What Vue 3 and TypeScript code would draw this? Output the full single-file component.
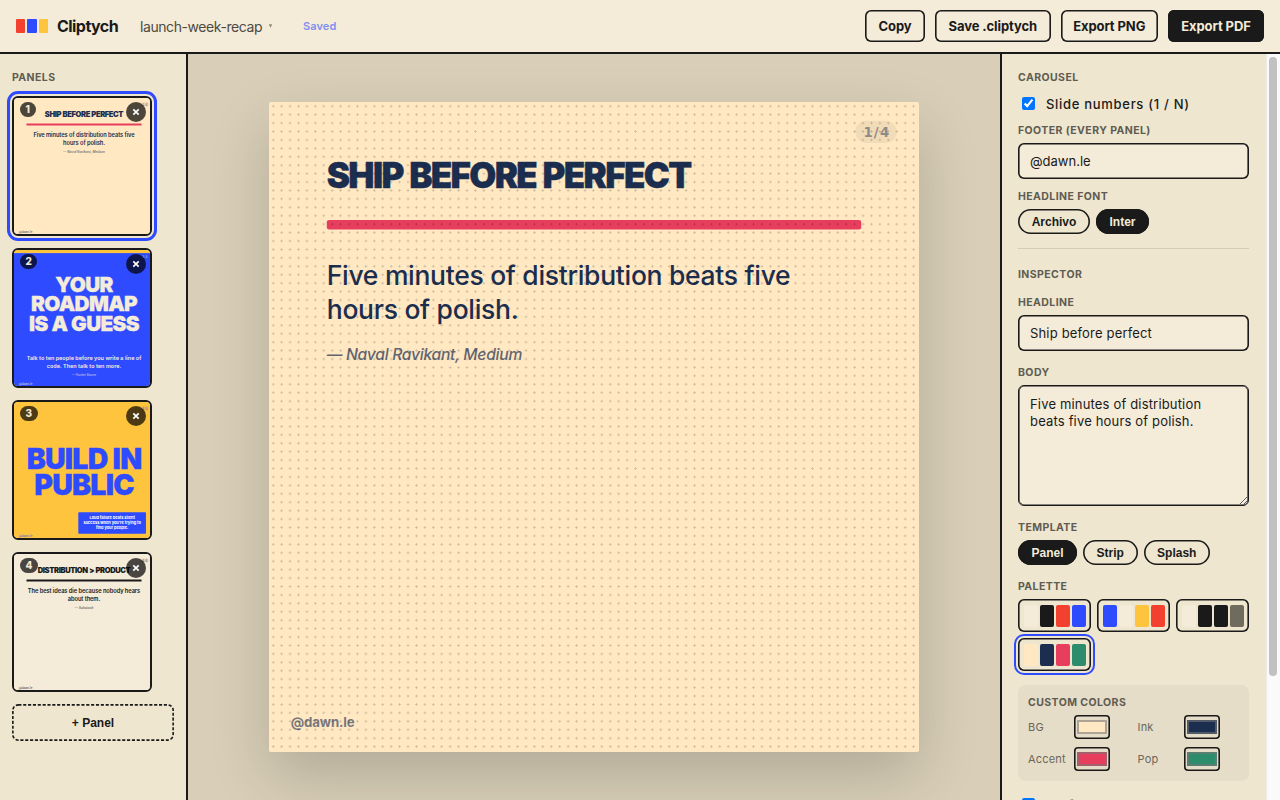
<script setup lang="ts">
import { ref } from 'vue'

type Template = 'panel' | 'strip' | 'splash'
interface Palette { bg: string; ink: string; accent: string; pop: string }
interface Panel { headline: string[]; body: string[]; author: string; template: Template; palette: Palette }

const palettes: Palette[] = [
  { bg: '#f4ebd9', ink: '#1a1a1a', accent: '#f2412e', pop: '#2e4bff' },
  { bg: '#2e4bff', ink: '#f4ebd9', accent: '#ffc43d', pop: '#f2412e' },
  { bg: '#f4ebd9', ink: '#1a1a1a', accent: '#1a1a1a', pop: '#6f6b5f' },
  { bg: '#ffe8c2', ink: '#1b2e4f', accent: '#e63e5c', pop: '#2c8c6c' },
]
const splash: Palette = { bg: '#ffc43d', ink: '#2e4bff', accent: '#2e4bff', pop: '#ffffff' }

const panels: Panel[] = [
  { headline: ['Ship before perfect'], body: ['Five minutes of distribution beats five', 'hours of polish.'], author: '— Naval Ravikant, Medium', template: 'panel', palette: palettes[3] },
  { headline: ['Your', 'roadmap', 'is a guess'], body: ['Talk to ten people before you write a line of', 'code. Then talk to ten more.'], author: '— Hunter Boone', template: 'strip', palette: palettes[1] },
  { headline: ['Build in', 'public'], body: ['Loud failure beats silent', "success when you're trying to", 'find your people.'], author: '', template: 'splash', palette: splash },
  { headline: ['Distribution > product'], body: ['The best ideas die because nobody hears', 'about them.'], author: '— Substack', template: 'panel', palette: palettes[2] },
]

const selected = ref(0)
const numbers = ref(true)
const halftone = ref(true)
const footer = ref('@dawn.le')
const headline = ref('Ship before perfect')
const body = ref('Five minutes of distribution beats five hours of polish.')
const font = ref('Inter')
const template = ref('Panel')
const activePalette = ref(3)
const custom = [
  { label: 'BG', value: '#ffe8c2' },
  { label: 'Ink', value: '#1b2e4f' },
  { label: 'Accent', value: '#e63e5c' },
  { label: 'Pop', value: '#2c8c6c' },
]
const vars = (p: Palette) => ({ '--bg': p.bg, '--ink': p.ink, '--accent': p.accent, '--pop': p.pop })
</script>

<template>
  <div class="app">
    <header class="topbar">
      <div class="logo"><i class="red"></i><i class="blue"></i><i class="yellow"></i></div>
      <strong class="brand">Cliptych</strong>
      <div class="file"><span>launch-week-recap</span><svg width="5" height="4" viewBox="0 0 5 4"><path d="M.8 .3h3.4L2.5 3.8z" fill="#8b867a" /></svg></div>
      <span class="saved">Saved</span>
      <nav class="actions">
        <button class="btn b1">Copy</button>
        <button class="btn b2">Save .cliptych</button>
        <button class="btn b3">Export PNG</button>
        <button class="btn b4 dark">Export PDF</button>
      </nav>
    </header>

    <div class="workspace">
      <aside class="left">
        <h2 class="label panels-label">Panels</h2>
        <div class="thumbs">
          <div v-for="(p, i) in panels" :key="i" class="thumb" :class="{ active: selected === i }" @click="selected = i">
            <div class="clip">
              <div class="slide" :class="p.template" :style="vars(p.palette)">
                <div class="headline"><div v-for="l in p.headline" :key="l">{{ l }}</div></div>
                <div class="rule"></div>
                <div class="copy"><div v-for="l in p.body" :key="l">{{ l }}</div></div>
                <div class="author">{{ p.author }}</div>
                <div class="foot">{{ footer }}</div>
                <div v-if="numbers" class="page">{{ i + 1 }}/4</div>
              </div>
            </div>
            <span class="num">{{ i + 1 }}</span>
            <span class="close"><svg width="8" height="8" viewBox="0 0 8 8"><path d="M1.3 1.3l5.4 5.4M6.7 1.3L1.3 6.7" stroke="#fff" stroke-width="1.7" /></svg></span>
          </div>
        </div>
        <button class="add">
          <svg class="dash" width="162" height="37" viewBox="0 0 162 37"><rect x=".85" y=".85" width="160.3" height="35.3" rx="5.5" fill="none" stroke="#1a1a1a" stroke-width="1.6" stroke-dasharray="3.1 1.75" /></svg>
          <span>+ Panel</span>
        </button>
      </aside>

      <main class="stage">
        <div class="canvas">
          <div class="slide panel" :style="vars(panels[0].palette)">
            <div class="headline">{{ headline }}</div>
            <div class="rule"></div>
            <div class="copy"><div v-for="l in panels[0].body" :key="l">{{ l }}</div></div>
            <div class="author">{{ panels[0].author }}</div>
            <div class="foot">{{ footer }}</div>
            <div v-if="numbers" class="page">1/4</div>
            <div v-if="halftone" class="dots"></div>
          </div>
        </div>
      </main>

      <aside class="right">
        <div class="fields">
          <h2 class="label carousel">Carousel</h2>
          <label class="check"><input v-model="numbers" type="checkbox"><span>Slide numbers (1 / N)</span></label>
          <h3 class="label l-footer">Footer (every panel)</h3>
          <input v-model="footer" class="text at" type="text">
          <h3 class="label l-font">Headline font</h3>
          <div class="chips">
            <button v-for="f in ['Archivo', 'Inter']" :key="f" class="chip" :class="[f.toLowerCase(), { dark: font === f }]" @click="font = f">{{ f }}</button>
          </div>
          <hr>
          <h2 class="label l-inspector">Inspector</h2>
          <h3 class="label l-headline">Headline</h3>
          <input v-model="headline" class="text" type="text">
          <h3 class="label l-body">Body</h3>
          <textarea v-model="body" class="text area" spellcheck="false"></textarea>
          <h3 class="label l-template">Template</h3>
          <div class="chips">
            <button v-for="t in ['Panel', 'Strip', 'Splash']" :key="t" class="chip" :class="['t-' + t.toLowerCase(), { dark: template === t }]" @click="template = t">{{ t }}</button>
          </div>
          <h3 class="label l-palette">Palette</h3>
          <div class="palettes">
            <button v-for="(p, i) in palettes" :key="i" class="palette" :class="{ active: activePalette === i }" :style="vars(p)" @click="activePalette = i">
              <i class="c-bg"></i><i class="c-ink"></i><i class="c-accent"></i><i class="c-pop"></i>
            </button>
          </div>
          <section class="custom">
            <h3 class="label">Custom colors</h3>
            <div class="colors">
              <label v-for="c in custom" :key="c.label"><span>{{ c.label }}</span><input type="color" :value="c.value"></label>
            </div>
          </section>
          <label class="check half"><input v-model="halftone" type="checkbox"><span>Halftone</span></label>
        </div>
        <div class="scroll"><div class="thumbbar"></div></div>
      </aside>
    </div>
  </div>
</template>

<style>
html, body { margin: 0; overflow: hidden; }
</style>

<style scoped>
* { box-sizing: border-box; }
.app { width: 1280px; height: 800px; overflow: hidden; display: flex; flex-direction: column; background: #f4ebd9; color: #1a1a1a; font-family: Inter, "Liberation Sans", sans-serif; }
button, input, textarea { font-family: inherit; color: inherit; margin: 0; }
.topbar { height: 54px; flex: none; display: flex; align-items: center; padding: 0 16px; border-bottom: 2px solid #1a1a1a; white-space: nowrap; }
.logo { display: flex; gap: 2px; width: 41px; }
.logo i { width: 9.3px; height: 14px; border-radius: 1px; }
.red { background: #f2412e; }
.blue { background: #2e4bff; }
.yellow { background: #ffc43d; }
.brand { width: 83px; font-size: 16px; font-weight: 700; letter-spacing: -.55px; }
.file { width: 163px; display: flex; align-items: center; gap: 6px; font-size: 14px; color: #4d4a43; letter-spacing: -.42px; }
.saved { font-size: 11px; font-weight: 600; color: #828ff0; letter-spacing: .1px; }
.actions { margin-left: auto; display: flex; gap: 10px; }
.btn { height: 32px; padding: 0; border: 0; box-shadow: inset 0 0 0 1.6px #1a1a1a; border-radius: 6px; background: none; font-size: 13px; font-weight: 700; letter-spacing: -.1px; }
.dark { background: #1a1a1a; color: #f4ebd9; }
.b1 { width: 60px; } .b2 { width: 115.5px; } .b3 { width: 97.5px; } .b4 { width: 96px; }

.workspace { flex: 1; min-height: 0; display: flex; }
.label { margin: 0; font-size: 10.5px; line-height: 16px; height: 14px; font-weight: 700; letter-spacing: .42px; text-transform: uppercase; color: #605c52; white-space: nowrap; }
.left { width: 188px; flex: none; border-right: 2px solid #1a1a1a; background: #eee6cf; padding: 16px 12px; }
.panels-label { margin-bottom: 12px; }
.thumbs { display: flex; flex-direction: column; gap: 12px; }
.thumb { position: relative; width: 140px; height: 140px; border: 2px solid #1a1a1a; border-radius: 6px; }
.thumb.active { outline: 3px solid #2e4bff; outline-offset: 2px; }
.clip { width: 136px; height: 136px; overflow: hidden; border-radius: 4px; text-align: center; }
.clip .slide { transform: scale(.12963); }
.clip .copy { font-weight: 600; }
.num { position: absolute; left: 6px; top: 4px; height: 15px; min-width: 16px; padding: 0 5.5px; border-radius: 8px; background: rgba(0, 0, 0, .7); color: #f4ebd9; font-size: 10px; line-height: 15px; font-weight: 800; }
.close { position: absolute; left: 112px; top: 4px; width: 20px; height: 20px; border-radius: 50%; background: rgba(0, 0, 0, .7); display: flex; align-items: center; justify-content: center; }
.add { position: relative; display: block; margin-top: 12px; padding: 0; width: 162px; height: 37px; border: 0; background: none; font: 700 12px "Liberation Sans", sans-serif; }
.dash { position: absolute; inset: 0; }

.slide { position: relative; width: 1080px; height: 1080px; transform-origin: 0 0; background: var(--bg); color: var(--ink); padding: 93px 96px 0; white-space: nowrap; }
.headline { font-weight: 900; text-transform: uppercase; font-size: 58px; line-height: 58px; letter-spacing: -2.75px; word-spacing: 2px; -webkit-text-stroke: .6px var(--ink); }
.rule { margin-top: 44.5px; height: 16px; border-radius: 4px; background: var(--accent); }
.copy { margin-top: 48px; font-size: 44px; line-height: 57px; font-weight: 500; letter-spacing: -.5px; }
.author { margin-top: 28px; font-size: 26px; line-height: 34px; font-weight: 500; font-style: italic; letter-spacing: -.46px; opacity: .7; }
.foot { position: absolute; left: 36px; top: 1014.5px; font-size: 22px; line-height: 30px; font-weight: 700; letter-spacing: -.2px; opacity: .6; }
.page { position: absolute; left: 974px; top: 31px; width: 69px; height: 37px; border-radius: 19px; background: rgba(26, 26, 26, .06); color: color-mix(in srgb, var(--ink) 50%, var(--bg)); text-align: center; font: 700 22px/40px "DejaVu Sans", sans-serif; letter-spacing: 2px; text-indent: 3px; }
.dots { position: absolute; inset: 0; background-image: radial-gradient(rgba(0, 0, 0, .18) 1.5px, transparent 2px); background-size: 14px 14px; }
.strip { padding-top: 188px; }
.strip .headline { font-size: 160px; line-height: 152px; letter-spacing: -4.6px; -webkit-text-stroke-width: 2px; }
.strip .rule { position: absolute; left: 0; right: 0; top: 0; height: 24px; margin: 0; border-radius: 0; }
.strip .copy { margin-top: 162px; font-size: 42px; line-height: 59px; font-weight: 600; letter-spacing: .3px; }
.strip .author { font-size: 24px; margin-top: 22px; letter-spacing: 0; font-style: normal; }
.splash { padding-top: 340px; }
.splash .headline { font-size: 220px; line-height: 198px; letter-spacing: -6px; -webkit-text-stroke-width: 2px; }
.splash .rule, .splash .author { display: none; }
.splash .copy { position: absolute; left: 496px; top: 851px; margin: 0; width: 522px; height: 165px; padding-top: 25px; background: var(--accent); color: #fff; border-radius: 5px; font-size: 30px; line-height: 38px; font-weight: 700; letter-spacing: 0; }

.stage { flex: 1; background: #d9cfb8; padding: 48px 0 0 81px; overflow: hidden; }
.canvas { width: 650px; height: 650px; border-radius: 2px; box-shadow: 0 24px 60px rgba(0, 0, 0, .18); }
.canvas .slide { transform: scale(.601852); border-radius: 3px; }

.right { width: 280px; flex: none; border-left: 2px solid #1a1a1a; background: #eee6cf; display: flex; overflow: hidden; }
.fields { width: 263px; flex: none; padding: 16px 16px 0; }
.scroll { margin-left: 1px; flex: 1; background: #fafafa; border-left: 1px solid #ececec; padding: 3px 0 0 2px; }
.thumbbar { width: 8px; height: 619px; border-radius: 4px; background: #c1c1c1; }
.check { display: flex; align-items: center; height: 13px; margin: 13px 0 0 4px; font-size: 13px; font-weight: 500; letter-spacing: .7px; white-space: nowrap; }
.check input { width: 13px; height: 13px; margin-right: 11px; }
.l-footer { margin-top: 13px; }
.text { display: block; width: 231px; height: 36px; margin-top: 6px; border: 0; box-shadow: inset 0 0 0 1.6px #1a1a1a; border-radius: 6px; background: #f4ebd9; padding: 0 12px; font-size: 13px; letter-spacing: .17px; outline: none; }
.at { letter-spacing: 0; }
.l-font { margin-top: 10px; }
.chips { display: flex; gap: 6px; margin-top: 6px; }
.chip { height: 25px; padding: 0; border: 0; box-shadow: inset 0 0 0 1.6px #1a1a1a; border-radius: 13px; background: none; font: 700 12px "Liberation Sans", sans-serif; }
.chip.dark { background: #1a1a1a; }
.archivo { width: 72px; } .inter { width: 53px; } .t-panel { width: 59px; } .t-strip { width: 54.5px; } .t-splash { width: 66.5px; }
hr { height: 1px; border: 0; margin: 14px 0 0; background: #d3ccb8; }
.l-inspector { margin-top: 18px; }
.l-headline { margin-top: 14px; }
.l-body { margin-top: 14px; }
.area { height: 121px; border: 1px solid #1a1a1a; box-shadow: inset 0 0 0 .6px #1a1a1a; padding: 10px 11px; line-height: 17px; resize: both; }
.l-template { margin-top: 14px; }
.l-palette { margin-top: 14px; }
.palettes { display: grid; grid-template-columns: repeat(3, 73px); gap: 6px; margin-top: 6px; }
.palette { height: 33px; border: 0; box-shadow: inset 0 0 0 1.6px #1a1a1a; border-radius: 6px; background: none; padding: 5.5px; display: flex; gap: 2px; }
.palette.active { outline: 2px solid #2e4bff; outline-offset: 2px; }
.palette i { flex: 1; height: 22px; border-radius: 2px; }
.c-bg { background: var(--bg); } .c-ink { background: var(--ink); } .c-accent { background: var(--accent); } .c-pop { background: var(--pop); }
.custom { margin-top: 14px; height: 96px; border-radius: 8px; background: #e5ddc7; padding: 10px; }
.colors { display: grid; grid-template-columns: 109.5px 1fr; row-gap: 8px; margin-top: 6px; }
.colors label { display: flex; align-items: center; font-size: 11px; letter-spacing: .2px; color: #6b675d; }
.colors span { width: 46px; }
.colors input { width: 36px; height: 24px; border: 0; box-shadow: inset 0 0 0 1.6px #1a1a1a; border-radius: 4px; background: none; padding: 1px; }
.colors input::-webkit-color-swatch { border: 2px solid rgba(119, 119, 119, .6); }
.half { margin-top: 17px; }
.half span { opacity: .35; }
</style>
